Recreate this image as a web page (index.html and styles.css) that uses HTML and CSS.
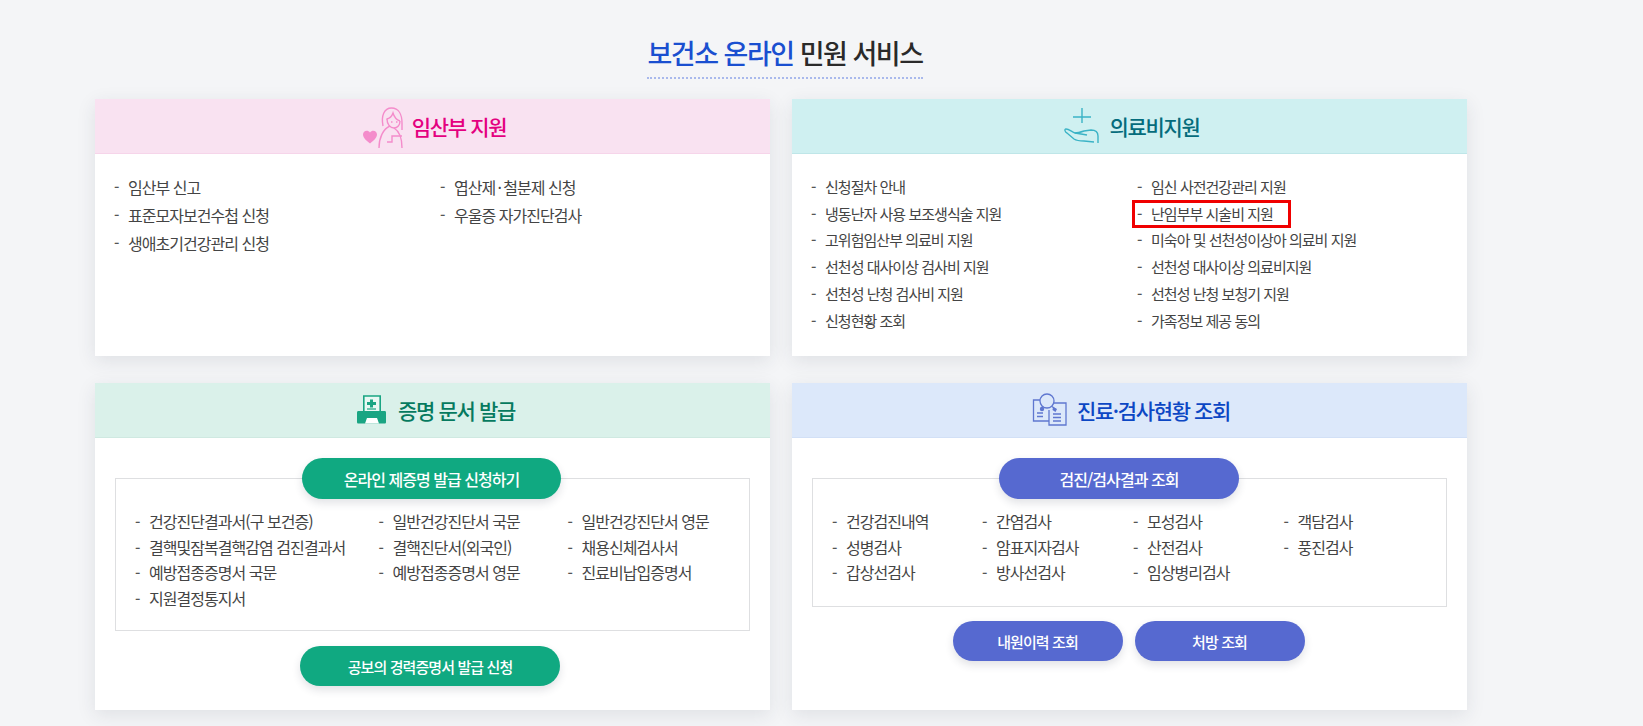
FILE: index.html
```html
<!DOCTYPE html>
<html lang="ko">
<head>
<meta charset="utf-8">
<title>보건소 온라인 민원 서비스</title>
<link rel="stylesheet" href="styles.css">
</head>
<body>
<main class="page">
  <div class="title-wrap"><h1 class="title"><span class="title-accent">보건소 온라인</span> 민원 서비스</h1></div>
  <div class="cards">
    <section class="card">
      <header class="card-head head-pink gap-7">
        <svg class="icon" width="46" height="46" viewBox="0 0 46 46" fill="none" stroke="#f48ccb" stroke-width="1.400"><path d="M11 40.500C8 38 4 35 4 31.500 4 27.500 9 26.500 11 29.500 13 26.500 18 27.500 18 31.500 18 35 14 38 11 40.500z" fill="#f48ccb" stroke="none"/><path d="M24 23C22 13 25 5 32.500 5 40 5 43 12 43 20v7"/><path d="M27.500 16c3.500-.5 5.500-3 6.500-6 1 3.500 4 7 7 8"/><path d="M28 16c0 5 3 9 7 9 3.500 0 6-3 6-7"/><path d="M20 45c0-10 4-19 11-22M35 25c5 3 8 10 8 20"/><path d="M43 33H33v6h-5"/><path d="M32 19h1.500M37 19h1.500"/></svg>
        <h2 class="head-text text-pink">임산부 지원</h2>
      </header>
      <div class="card-body">
        <ul class="list list-two list-roomy">
          <li>임산부 신고</li><li>엽산제&thinsp;·&thinsp;철분제 신청</li>
          <li>표준모자보건수첩 신청</li><li>우울증 자가진단검사</li>
          <li>생애초기건강관리 신청</li>
        </ul>
      </div>
    </section>
    <section class="card">
      <header class="card-head head-cyan gap-4">
        <svg class="icon" width="46" height="46" viewBox="0 0 46 46" fill="none" stroke="#3bb3c6" stroke-width="1.400"><path d="M22 5v15M13 14h18"/><path d="M38 40v-7c0-4-3-6-7-6l-7 1c-3 1-6 2-9 2-3-1-6-4-9-4-2 0-1 3 1 4l7 6c3 2 6 2 10 2l10 1"/><path d="M15 30l12 2"/></svg>
        <h2 class="head-text text-teal">의료비지원</h2>
      </header>
      <div class="card-body">
        <ul class="list list-two list-tight">
          <li>신청절차 안내</li><li>임신 사전건강관리 지원</li>
          <li>냉동난자 사용 보조생식술 지원</li><li class="marked">난임부부 시술비 지원</li>
          <li>고위험임산부 의료비 지원</li><li>미숙아 및 선천성이상아 의료비 지원</li>
          <li>선천성 대사이상 검사비 지원</li><li>선천성 대사이상 의료비지원</li>
          <li>선천성 난청 검사비 지원</li><li>선천성 난청 보청기 지원</li>
          <li>신청현황 조회</li><li>가족정보 제공 동의</li>
        </ul>
      </div>
    </section>
    <section class="card">
      <header class="card-head head-mint gap-5">
        <svg class="icon" width="42" height="42" viewBox="0 0 42 42"><path d="M13.800 7h16.400v16H13.800z" fill="#e9f8f3" stroke="#1aa583" stroke-width="1.600"/><path d="M20 10.500h3V13h3v3h-3v2.500h-3V16h-3v-3h3z" fill="#1aa583"/><path d="M17 20h9" stroke="#1aa583" stroke-width="1.200"/><path d="M8.500 22h26c1 0 1.500.5 1.500 1.500V33c0 1-.5 1.500-1.500 1.500h-26C7.500 34.500 7 34 7 33v-9.500C7 22.500 7.500 22 8.500 22z" fill="#1aa583"/><path d="M17 29h10l2 5.500H15z" fill="#fff"/></svg>
        <h2 class="head-text text-green">증명 문서 발급</h2>
      </header>
      <div class="card-body boxed">
        <a class="pill pill-green pill-top pill-w259">온라인 제증명 발급 신청하기</a>
        <div class="frame frame-green">
          <ul class="list list-docs">
            <li>건강진단결과서(구 보건증)</li><li>일반건강진단서 국문</li><li>일반건강진단서 영문</li>
            <li>결핵및잠복결핵감염 검진결과서</li><li>결핵진단서(외국인)</li><li>채용신체검사서</li>
            <li>예방접종증명서 국문</li><li>예방접종증명서 영문</li><li>진료비납입증명서</li>
            <li>지원결정통지서</li>
          </ul>
        </div>
        <div class="actions"><a class="pill pill-green pill-w260">공보의 경력증명서 발급 신청</a></div>
      </div>
    </section>
    <section class="card">
      <header class="card-head head-blue gap-6">
        <svg class="icon" width="42" height="42" viewBox="0 0 42 42" fill="none" stroke="#5f77d0" stroke-width="1.300"><path d="M11 11H4.500v21H20"/><path d="M25 14h12v22H20V21"/><circle cx="18" cy="12" r="7"/><path d="M13.500 17.500L13 21M23 17.500l4 3"/><circle cx="13" cy="20" r="2.200" fill="#5f77d0" stroke="none"/><path d="M24 18l4 2-1.500 3-3-2z" fill="#5f77d0" stroke="none"/><path d="M8 24h6M8 27.500h6M24 25h8M24 28.500h8M24 32h8"/></svg>
        <h2 class="head-text text-blue">진료·검사현황 조회</h2>
      </header>
      <div class="card-body boxed">
        <a class="pill pill-indigo pill-top pill-w240">검진/검사결과 조회</a>
        <div class="frame frame-indigo">
          <ul class="list list-exams">
            <li>건강검진내역</li><li>간염검사</li><li>모성검사</li><li>객담검사</li>
            <li>성병검사</li><li>암표지자검사</li><li>산전검사</li><li>풍진검사</li>
            <li>갑상선검사</li><li>방사선검사</li><li>임상병리검사</li>
          </ul>
        </div>
        <div class="actions actions-pair"><a class="pill pill-indigo pill-w170">내원이력 조회</a><a class="pill pill-indigo pill-w170">처방 조회</a></div>
      </div>
    </section>
  </div>
</main>
</body>
</html>
```
FILE: styles.css
```css
* { box-sizing: border-box; }
html, body { margin: 0; height: 726px; overflow: hidden; }
body {
  background: #f4f5f7;
  font-family: "Noto Sans CJK KR", "Noto Sans", sans-serif;
  color: #333;
}
.page { padding: 35px 0 0 95px; }
.title-wrap { width: 1380px; text-align: center; }
.title {
  display: inline-block;
  margin: 0;
  padding-bottom: 6px;
  font-size: 27px;
  line-height: 36px;
  font-weight: 500;
  letter-spacing: -0.055em;
  color: #2a2a2a;
  border-bottom: 2px dotted #a9b9ec;
}
.title-accent { color: #1a4fd0; }
.cards {
  display: grid;
  grid-template-columns: 675px 675px;
  grid-template-rows: 257px 327px;
  column-gap: 22px;
  row-gap: 27px;
  margin-top: 20px;
}
.card { background: #fff; box-shadow: 0 5px 18px rgba(40, 50, 70, 0.1); }
.card-head {
  display: flex;
  align-items: center;
  justify-content: center;
  height: 55px;
  border-bottom: 1px solid;
}
.gap-4 { gap: 4px; }
.gap-5 { gap: 6px; }
.gap-6 { gap: 6px; }
.gap-7 { gap: 7px; }
.head-pink { background: #f9e2f1; border-color: #f6d5ea; }
.head-cyan { background: #cff0f1; border-color: #bfe6e8; }
.head-mint { background: #daf1ea; border-color: #cfe9e1; }
.head-blue { background: #dce8fa; border-color: #d2e0f6; }
.icon { flex: none; }
.head-text { margin: 0; font-size: 21px; line-height: 28px; font-weight: 500; letter-spacing: -0.065em; }
.text-pink { color: #e4007f; }
.text-teal { color: #056c7c; }
.text-green { color: #067a5f; }
.text-blue { color: #0c47c4; }
.card-body { padding: 20px 20px 0; }
.list {
  list-style: none;
  margin: 0;
  padding: 0;
  display: grid;
  font-size: 16px;
  letter-spacing: -0.06em;
  color: #444;
}
.list li { position: relative; padding-left: 13px; white-space: nowrap; }
.list li::before {
  content: "-";
  position: absolute;
  left: -1px;
  top: 0;
  font-size: 15px;
  font-weight: 500;
  color: #555;
}
.list-two { grid-template-columns: 326px 1fr; }
.list-roomy { line-height: 28px; margin-top: -1px; }
.list-tight { font-size: 15px; line-height: 26.700px; letter-spacing: -0.065em; }
.marked::after {
  content: "";
  box-sizing: border-box;
  position: absolute;
  left: -6px;
  top: -1px;
  width: 159px;
  height: 28px;
  border: 3px solid #f00000;
}
.boxed { position: relative; padding-top: 40px; }
.frame { border: 1px solid #dedfe1; }
.frame-green { height: 153px; padding: 30px 20px 0; }
.frame-indigo { height: 129px; padding: 30px 20px 0; }
.list-docs { grid-template-columns: 243.500px 189px 1fr; line-height: 25.500px; }
.list-exams { grid-template-columns: 150px 151px 150.500px 1fr; line-height: 25.500px; }
.pill {
  display: flex;
  align-items: center;
  justify-content: center;
  height: 40px;
  border-radius: 20px;
  color: #fff;
  font-size: 15px;
  font-weight: 500;
  letter-spacing: -0.06em;
  box-shadow: 0 4px 8px rgba(40, 50, 70, 0.14);
}
.pill-green { background: #10a981; }
.pill-indigo { background: #5669d0; }
.pill-top { position: absolute; top: 20px; height: 41px; border-radius: 21px; font-size: 16px; letter-spacing: -0.06em; }
.pill-w259 { width: 259px; left: 207px; }
.pill-w260 { width: 260px; }
.pill-w240 { width: 240px; left: 207px; }
.pill-w170 { width: 170px; }
.actions { display: flex; justify-content: center; gap: 12px; margin-top: 15px; padding-right: 5px; }
.actions-pair { margin-top: 14px; padding-right: 2px; }
```
